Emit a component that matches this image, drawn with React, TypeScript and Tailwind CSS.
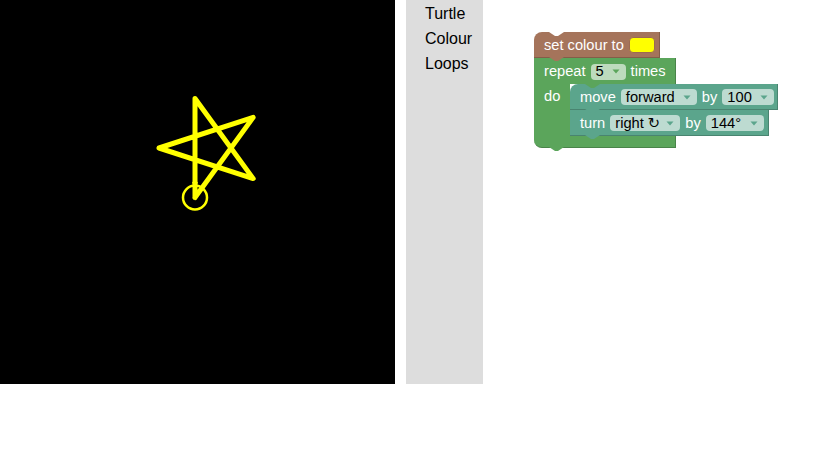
import React from "react";

const FONT = { fontFamily: '"Liberation Sans", "DejaVu Sans", Arial, sans-serif' };

function Arrow({ color }: { color: string }) {
  return (
    <svg width="8" height="5" viewBox="0 0 8 5" className="shrink-0">
      <polygon points="0.5,0.5 7.5,0.5 4,4.5" fill={color} />
    </svg>
  );
}

function Dropdown({
  text,
  w,
  bg,
  arrow,
}: {
  text: string;
  w: string;
  bg: string;
  arrow: string;
}) {
  return (
    <div
      className={`flex h-[16px] items-center justify-between rounded-[4px] pl-[5px] pr-[6px] text-black ${w} ${bg}`}
    >
      <span className="leading-none">{text}</span>
      <Arrow color={arrow} />
    </div>
  );
}

export default function App() {
  const p0 = [195, 197.5];
  const pts: number[][] = [p0];
  let heading = 0;
  let [x, y] = p0;
  for (let i = 0; i < 5; i++) {
    const r = (heading * Math.PI) / 180;
    x = x + 99 * Math.sin(r);
    y = y - 99 * Math.cos(r);
    pts.push([x, y]);
    heading += 144;
  }
  const d = pts.map((p, i) => `${i === 0 ? "M" : "L"}${p[0].toFixed(1)},${p[1].toFixed(1)}`).join(" ");

  return (
    <div className="h-[460px] w-[821px] bg-white" style={FONT}>
      <div className="flex h-[384px]">
        {/* Drawing canvas */}
        <div className="h-[384px] w-[395px] shrink-0 bg-black">
          <svg width="395" height="384" viewBox="0 0 395 384">
            <path
              d={d}
              fill="none"
              stroke="#ffff00"
              strokeWidth="5"
              strokeLinecap="round"
              strokeLinejoin="round"
            />
            <circle cx="195" cy="197.5" r="12" fill="none" stroke="#ffff00" strokeWidth="2.5" />
            <path
              d="M192.5,183.5 L195,180 L197.5,183.5"
              fill="none"
              stroke="#ffff00"
              strokeWidth="1.5"
            />
          </svg>
        </div>

        {/* Toolbox */}
        <div className="ml-[11px] h-[384px] w-[77px] shrink-0 bg-[#dddddd] pl-[19px] pt-[1px] text-[16px] text-black">
          <div className="h-[25px] leading-[26px]">Turtle</div>
          <div className="h-[25px] leading-[26px]">Colour</div>
          <div className="h-[25px] leading-[26px]">Loops</div>
        </div>

        {/* Workspace */}
        <div className="relative h-[384px] flex-1 bg-white text-[14.67px] text-white">
          <div className="absolute left-[51px] top-[32px]">
            {/* set colour to */}
            <div className="relative z-30 flex h-[26px] w-[126px] items-center gap-[5px] rounded-tl-[8px] border-b border-r border-[#845d49] bg-[#a5745b] pl-[10px] pt-[1px]">
              <div className="absolute left-[15px] top-0 h-[4px] w-[15px] bg-white [clip-path:polygon(0_0,100%_0,60%_100%,40%_100%)]" />
              <span className="leading-none">set colour to</span>
              <div className="h-[16px] w-[26px] rounded-[4px] border border-[#9c6a52] bg-[#ffff00]" />
              <div className="absolute left-[15px] top-full h-[4px] w-[15px] bg-[#a5745b] [clip-path:polygon(0_0,100%_0,60%_100%,40%_100%)]" />
            </div>

            {/* repeat */}
            <div className="relative z-10">
              <div className="flex h-[26px] w-[142px] items-center gap-[5px] border-r border-[#498449] bg-[#5ba55b] pl-[10px] pt-[1px]">
                <span className="leading-none">repeat</span>
                <Dropdown text="5" w="w-[35px]" bg="bg-[#bddbbd]" arrow="#5ba55b" />
                <span className="leading-none">times</span>
              </div>
              <div className="flex">
                <div className="w-[36px] bg-[#5ba55b] pl-[10px] pt-[5px] leading-none">
                  <span className="block leading-none">do</span>
                </div>
                <div className="flex flex-col">
                  {/* move */}
                  <div className="relative z-20 flex h-[26px] w-[208px] items-center gap-[5px] rounded-tl-[8px] border-b border-r border-[#498470] bg-[#5ba58c] pl-[10px] pt-[1px]">
                    <div className="absolute left-[15px] top-0 h-[4px] w-[15px] bg-[#5ba55b] [clip-path:polygon(0_0,100%_0,60%_100%,40%_100%)]" />
                    <span className="leading-none">move</span>
                    <Dropdown text="forward" w="w-[76px]" bg="bg-[#bddbd1]" arrow="#5ba58c" />
                    <span className="leading-none">by</span>
                    <Dropdown text="100" w="w-[52px]" bg="bg-[#bddbd1]" arrow="#5ba58c" />
                    <div className="absolute left-[15px] top-full h-[4px] w-[15px] bg-[#5ba58c] [clip-path:polygon(0_0,100%_0,60%_100%,40%_100%)]" />
                  </div>
                  {/* turn */}
                  <div className="relative z-10 flex h-[26px] w-[199px] items-center gap-[5px] border-b border-r border-[#498470] bg-[#5ba58c] pl-[10px] pt-[1px]">
                    <span className="leading-none">turn</span>
                    <Dropdown text="right ↻" w="w-[70px]" bg="bg-[#bddbd1]" arrow="#5ba58c" />
                    <span className="leading-none">by</span>
                    <Dropdown text="144°" w="w-[58px]" bg="bg-[#bddbd1]" arrow="#5ba58c" />
                    <div className="absolute left-[15px] top-full h-[4px] w-[15px] bg-[#5ba58c] [clip-path:polygon(0_0,100%_0,60%_100%,40%_100%)]" />
                  </div>
                </div>
              </div>
              <div className="relative h-[12px] w-[142px] rounded-bl-[8px] border-b border-r border-[#498449] bg-[#5ba55b]">
                <div className="absolute left-[15px] top-full h-[4px] w-[15px] bg-[#5ba55b] [clip-path:polygon(0_0,100%_0,60%_100%,40%_100%)]" />
              </div>
            </div>
          </div>
        </div>
      </div>
    </div>
  );
}
